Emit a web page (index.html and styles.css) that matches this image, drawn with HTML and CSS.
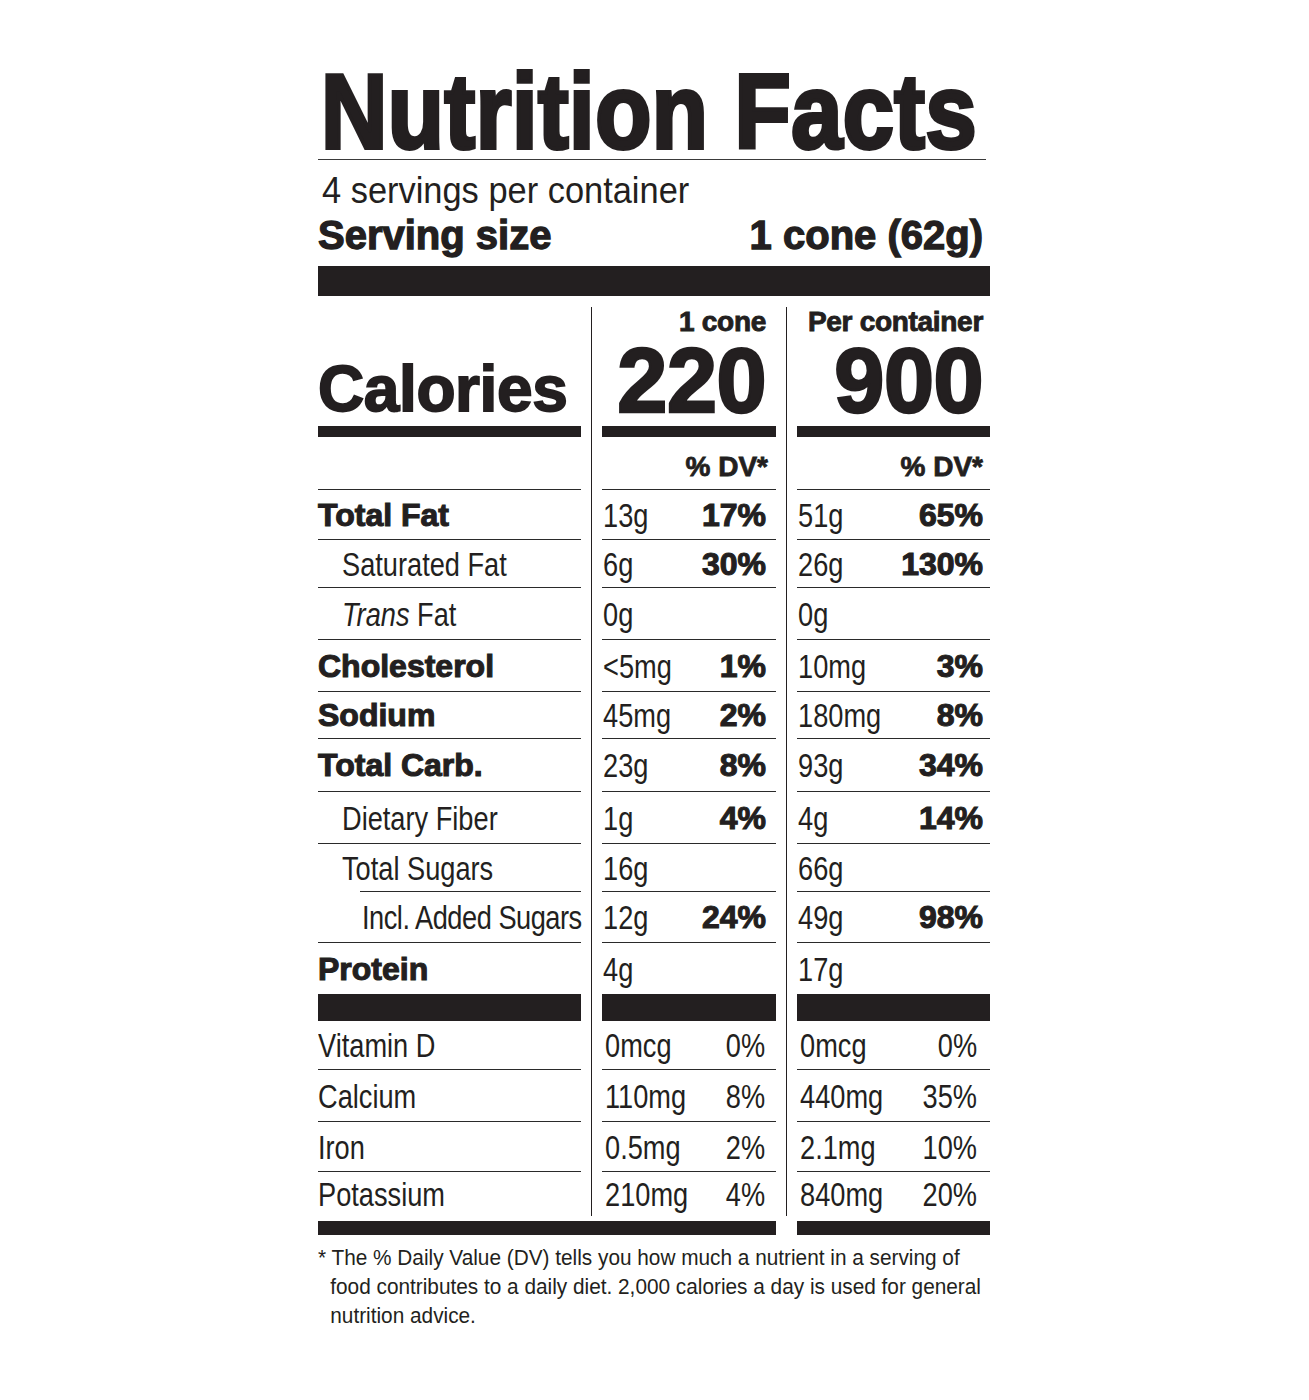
FILE: index.html
```html
<!DOCTYPE html>
<html lang="en">
<head>
<meta charset="utf-8">
<title>Nutrition Facts</title>
<link rel="stylesheet" href="styles.css">
</head>
<body>
<div class="label">
  <h1 class="title"><span class="title-text">Nutrition Facts</span></h1>
  <p class="servings">4 servings per container</p>
  <div class="serving-size"><span>Serving size</span><span>1 cone (62g)</span></div>
  <div class="bar-thick"></div>

  <div class="grid">
    <div class="divider d1"></div>
    <div class="divider d2"></div>

    <div class="c1 head"><span class="calories">Calories</span></div>
    <div class="c2 head"><span class="per">1 cone</span><span class="cal-num">220</span></div>
    <div class="c3 head"><span class="per">Per container</span><span class="cal-num">900</span></div>

    <div class="c1 row dvrow"></div>
    <div class="c2 row dvrow"><span class="dv">% DV*</span></div>
    <div class="c3 row dvrow"><span class="dv">% DV*</span></div>

    <div class="c1 row name b">Total Fat</div>
    <div class="c2 row val"><span class="t">13g</span><span class="pct">17%</span></div>
    <div class="c3 row val"><span class="t">51g</span><span class="pct">65%</span></div>

    <div class="c1 row name ind1"><span class="t">Saturated Fat</span></div>
    <div class="c2 row val"><span class="t">6g</span><span class="pct">30%</span></div>
    <div class="c3 row val"><span class="t">26g</span><span class="pct">130%</span></div>

    <div class="c1 row name ind1"><span class="t"><i>Trans</i> Fat</span></div>
    <div class="c2 row val"><span class="t">0g</span></div>
    <div class="c3 row val"><span class="t">0g</span></div>

    <div class="c1 row name b">Cholesterol</div>
    <div class="c2 row val"><span class="t">&lt;5mg</span><span class="pct">1%</span></div>
    <div class="c3 row val"><span class="t">10mg</span><span class="pct">3%</span></div>

    <div class="c1 row name b">Sodium</div>
    <div class="c2 row val"><span class="t">45mg</span><span class="pct">2%</span></div>
    <div class="c3 row val"><span class="t">180mg</span><span class="pct">8%</span></div>

    <div class="c1 row name b">Total Carb.</div>
    <div class="c2 row val"><span class="t">23g</span><span class="pct">8%</span></div>
    <div class="c3 row val"><span class="t">93g</span><span class="pct">34%</span></div>

    <div class="c1 row name ind1"><span class="t">Dietary Fiber</span></div>
    <div class="c2 row val"><span class="t">1g</span><span class="pct">4%</span></div>
    <div class="c3 row val"><span class="t">4g</span><span class="pct">14%</span></div>

    <div class="c1 row name ind1 sugars"><span class="t">Total Sugars</span></div>
    <div class="c2 row val"><span class="t">16g</span></div>
    <div class="c3 row val"><span class="t">66g</span></div>

    <div class="c1 row name ind2"><span class="t added">Incl. Added Sugars</span></div>
    <div class="c2 row val"><span class="t">12g</span><span class="pct">24%</span></div>
    <div class="c3 row val"><span class="t">49g</span><span class="pct">98%</span></div>

    <div class="c1 row name b last">Protein</div>
    <div class="c2 row val last"><span class="t">4g</span></div>
    <div class="c3 row val last"><span class="t">17g</span></div>

    <div class="c1 blackbar"></div>
    <div class="c2 blackbar"></div>
    <div class="c3 blackbar"></div>

    <div class="c1 row name"><span class="t">Vitamin D</span></div>
    <div class="c2 row val vit"><span class="t">0mcg</span><span class="vpct">0%</span></div>
    <div class="c3 row val vit"><span class="t">0mcg</span><span class="vpct">0%</span></div>

    <div class="c1 row name"><span class="t">Calcium</span></div>
    <div class="c2 row val vit"><span class="t">110mg</span><span class="vpct">8%</span></div>
    <div class="c3 row val vit"><span class="t">440mg</span><span class="vpct">35%</span></div>

    <div class="c1 row name"><span class="t">Iron</span></div>
    <div class="c2 row val vit"><span class="t">0.5mg</span><span class="vpct">2%</span></div>
    <div class="c3 row val vit"><span class="t">2.1mg</span><span class="vpct">10%</span></div>

    <div class="c1 row name last"><span class="t">Potassium</span></div>
    <div class="c2 row val vit last"><span class="t">210mg</span><span class="vpct">4%</span></div>
    <div class="c3 row val vit last"><span class="t">840mg</span><span class="vpct">20%</span></div>
  </div>

  <div class="bottom-bars"><div class="bb bb1"></div><div class="bb bb2"></div></div>

  <p class="foot">* The % Daily Value (DV) tells you how much a nutrient in a serving of<br>food contributes to a daily diet. 2,000 calories a day is used for general<br>nutrition advice.</p>
</div>
</body>
</html>
```
FILE: styles.css
```css
html, body {
  margin: 0;
  padding: 0;
  background: #ffffff;
}

body {
  color: #231f20;
  font-family: "Liberation Sans", Arial, sans-serif;
}

.label {
  width: 672px;
  margin-left: 318px;
  padding-top: 65px;
}

/* Title: heavy, condensed */
.title {
  margin: 0 4px 0 0;
  font-weight: 700;
  font-size: 105px;
  line-height: 94px;
  white-space: nowrap;
  border-bottom: 1px solid #3a3a3a;
}

.title-text {
  display: inline-block;
  transform: scaleX(0.875);
  transform-origin: left center;
  letter-spacing: 0.6px;
  -webkit-text-stroke: 4px #231f20;
  margin-left: 3px;
}

/* condensed regular text */
.servings {
  margin: 9px 0 0 4px;
  font-size: 37px;
  line-height: 44px;
  white-space: nowrap;
  transform: scaleX(0.93);
  transform-origin: left center;
}

.serving-size {
  display: flex;
  justify-content: space-between;
  margin: 0 7px 0 0;
  font-weight: 700;
  font-size: 40px;
  line-height: 44px;
  -webkit-text-stroke: 1.3px #231f20;
}

.bar-thick {
  height: 30px;
  margin-top: 9px;
  background: #231f20;
}

.grid {
  display: grid;
  grid-template-columns: 263px 21px 174px 21px 193px;
  grid-template-rows: 130px 53px 50px 48px 52px 52px 47px 53px 52px 48px 51px 51px 27px 49px 52px 50px 44px;
  margin-top: 11px;
}

.divider {
  width: 1px;
  justify-self: center;
  background: #231f20;
  grid-row: 1 / -1;
}

.d1 { grid-column: 2; }
.d2 { grid-column: 4; }

.c1 { grid-column: 1; }
.c2 { grid-column: 3; }
.c3 { grid-column: 5; }

.head {
  display: flex;
  flex-direction: column;
  justify-content: flex-end;
  align-items: flex-end;
  border-bottom: 11px solid #231f20;
  box-sizing: border-box;
  font-weight: 700;
  padding-bottom: 1px;
}

.c2.head { padding-right: 10px; }
.c3.head { padding-right: 7px; }

.c1.head {
  align-items: flex-start;
  padding-bottom: 5px;
}

.calories {
  font-size: 64px;
  line-height: 64px;
  -webkit-text-stroke: 1.8px #231f20;
  letter-spacing: -0.4px;
}

.per {
  font-size: 28px;
  line-height: 30px;
  letter-spacing: -0.3px;
  -webkit-text-stroke: 0.9px #231f20;
  white-space: nowrap;
}

.cal-num {
  font-size: 90px;
  line-height: 88px;
  -webkit-text-stroke: 2.6px #231f20;
  letter-spacing: -0.5px;
}

.row {
  display: flex;
  align-items: center;
  box-sizing: border-box;
  border-bottom: 1px solid #2a2a2a;
  font-size: 34px;
  line-height: 36px;
  white-space: nowrap;
}

.row.last { border-bottom: none; }

/* condensed regular text inside rows */
.t {
  display: inline-block;
  transform: scaleX(0.8);
  transform-origin: left center;
}

.dvrow {
  justify-content: flex-end;
  padding-top: 8px;
}

.c2.dvrow { padding-right: 8px; }
.c3.dvrow { padding-right: 7px; }

.dv {
  font-weight: 700;
  font-size: 28px;
  -webkit-text-stroke: 0.8px #231f20;
}

.name.b {
  font-weight: 700;
  font-size: 32px;
  -webkit-text-stroke: 1.1px #231f20;
}

.ind1 { padding-left: 24px; }
.ind2 { padding-left: 44px; }

.added { letter-spacing: -0.6px; }

.sugars {
  border-bottom: none;
  background: linear-gradient(#2a2a2a, #2a2a2a) no-repeat right bottom / calc(100% - 42px) 1px;
}

.val {
  justify-content: space-between;
  padding-left: 1px;
}

.c2.val { padding-right: 10px; }
.c3.val { padding-right: 7px; }

.pct {
  font-weight: 700;
  font-size: 32px;
  -webkit-text-stroke: 1.1px #231f20;
}

.vit { padding-left: 3px; }

.vpct {
  display: inline-block;
  transform: scaleX(0.8);
  transform-origin: right center;
}

.c2 .vpct { margin-right: 1px; }
.c3 .vpct { margin-right: 6px; }

.blackbar { background: #231f20; }

.bottom-bars {
  display: flex;
  gap: 21px;
  margin-top: 5px;
}

.bb {
  height: 14px;
  background: #231f20;
}

.bb1 { width: 458px; }
.bb2 { width: 193px; }

.foot {
  margin: 8px 0 0 0;
  padding-left: 13px;
  text-indent: -13px;
  font-size: 22px;
  line-height: 29px;
  white-space: nowrap;
  transform: scaleX(0.945);
  transform-origin: left top;
}
```
